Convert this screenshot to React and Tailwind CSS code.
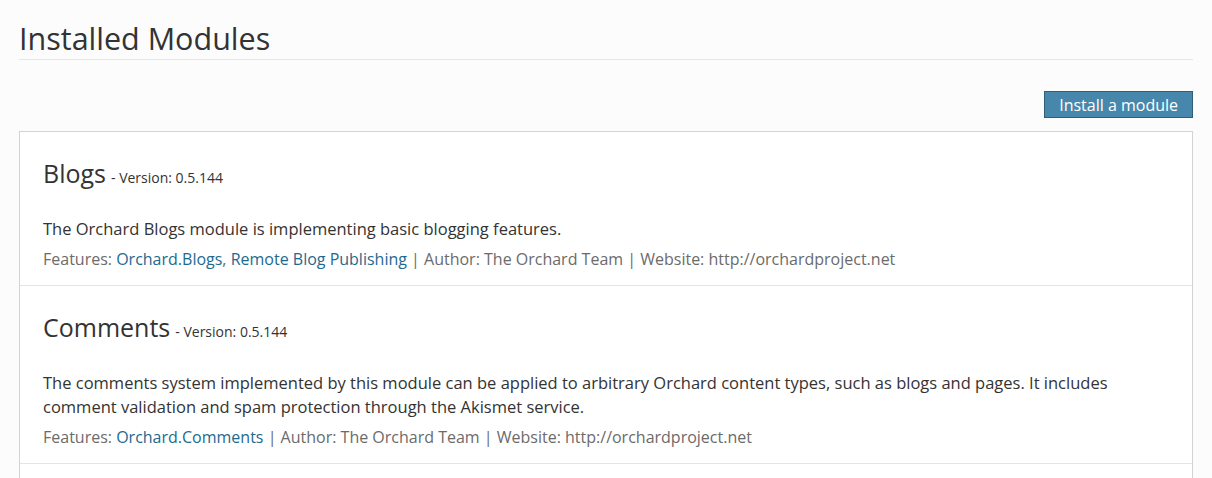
import React from 'react';

const modules = [
  {
    name: 'Blogs',
    version: '0.5.144',
    description: 'The Orchard Blogs module is implementing basic blogging features.',
    features: ['Orchard.Blogs', 'Remote Blog Publishing'],
    author: 'The Orchard Team',
    website: 'http://orchardproject.net',
  },
  {
    name: 'Comments',
    version: '0.5.144',
    description:
      'The comments system implemented by this module can be applied to arbitrary Orchard content types, such as blogs and pages. It includes comment validation and spam protection through the Akismet service.',
    features: ['Orchard.Comments'],
    author: 'The Orchard Team',
    website: 'http://orchardproject.net',
  },
];

function ModuleRow({ mod }) {
  return (
    <li className="px-[23px] pt-[29px] pb-[14px] border-b border-[#e4e4e4]">
      <h2 className="flex items-baseline leading-none">
        <span className="text-[25px] text-[#333]">{mod.name}</span>
        <span className="text-[14px] text-[#333] ml-[5px]">- Version: {mod.version}</span>
      </h2>
      <p className="mt-[31px] text-[16.5px] leading-[24px] text-[#333] pr-[40px]">{mod.description}</p>
      <p className="mt-[6px] text-[16px] leading-[24px] text-[#6b6b6b]">
        Features:{' '}
        {mod.features.map((f, i) => (
          <React.Fragment key={f}>
            <a href="#" className="text-[#1d6a8f]">{f}</a>
            {i < mod.features.length - 1 ? ', ' : ''}
          </React.Fragment>
        ))}{' '}
        | Author: {mod.author} | Website: {mod.website}
      </p>
    </li>
  );
}

export default function App() {
  return (
    <div className="h-screen overflow-hidden bg-[#fcfcfc] pl-[19px] pr-[19px] pt-[18px] font-['Open_Sans',sans-serif]">
      <h1 className="text-[30.5px] leading-[40px] text-[#333] pb-[1px] border-b border-[#e6e6e6]">Installed Modules</h1>
      <div className="flex justify-end mt-[31px]">
        <button className="h-[27px] px-[14px] bg-[#4687ab] border border-[#2f5e79] text-white text-[16px] leading-none">
          Install a module
        </button>
      </div>
      <ul className="mt-[13px] pb-[14px] bg-white border border-[#d3d3d3] border-b-0">
        {modules.map((m) => (
          <ModuleRow key={m.name} mod={m} />
        ))}
      </ul>
    </div>
  );
}
